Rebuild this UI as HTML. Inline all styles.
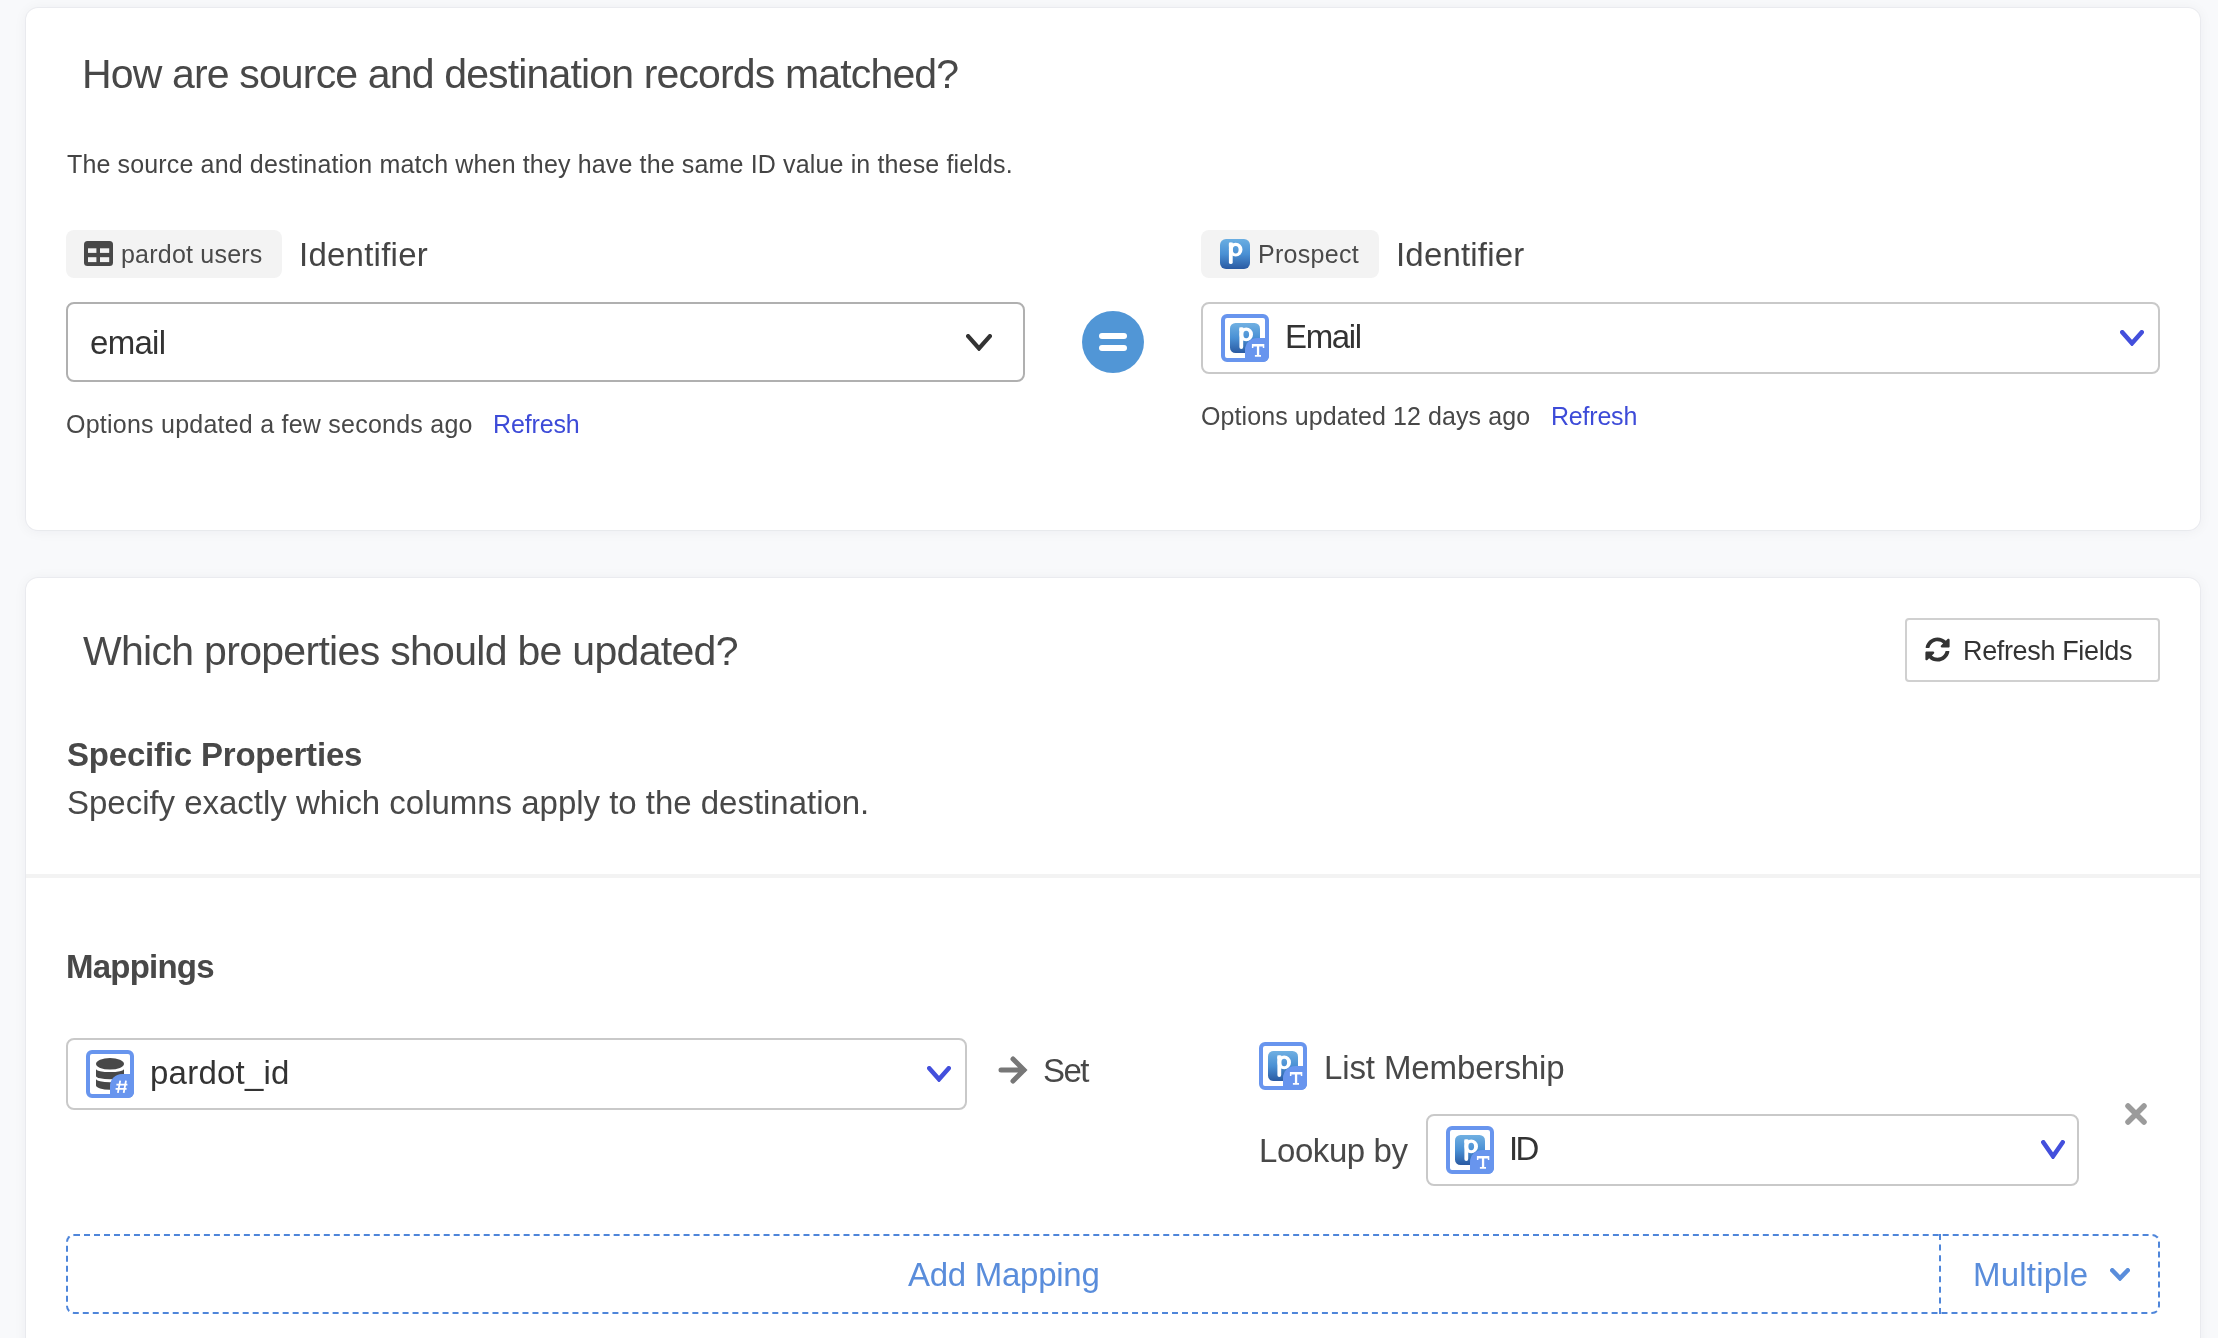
<!DOCTYPE html>
<html><head><meta charset="utf-8">
<style>
html,body{margin:0;padding:0;}
body{width:2218px;height:1338px;overflow:hidden;background:#f8f9fb;position:relative;font-family:"Liberation Sans",sans-serif;}
.card{position:absolute;background:#fff;border-radius:12px;box-shadow:0 0 0 1px rgba(20,30,50,0.04),0 1px 14px rgba(20,30,50,0.055);}
.t{position:absolute;white-space:nowrap;line-height:1;will-change:transform;}
.ic{position:absolute;display:block;}
.badge{position:absolute;background:#f3f3f3;border-radius:8px;}
.sel{position:absolute;box-sizing:border-box;background:#fff;border:2px solid #c9c9c9;border-radius:8px;}
</style></head><body>
<div class="card" style="left:26px;top:8px;width:2174px;height:522px"></div>
<div class="card" style="left:26px;top:578px;width:2174px;height:800px"></div>
<div style="position:absolute;left:26px;top:874px;width:2174px;height:4px;background:#f3f3f3"></div>

<div class="badge" style="left:66px;top:230px;width:216px;height:48px"></div>
<svg class="ic" style="left:84px;top:241px" width="29" height="25" viewBox="0 0 29 25"><rect x="0" y="0" width="29" height="25" rx="3.5" fill="#484848"/><rect x="4" y="7.3" width="8.4" height="4.6" fill="#f3f3f3"/><rect x="16" y="7.3" width="9.2" height="4.6" fill="#f3f3f3"/><rect x="4" y="16.2" width="8.4" height="4.9" fill="#f3f3f3"/><rect x="16" y="16.2" width="9.2" height="4.9" fill="#f3f3f3"/></svg>
<div class="sel" style="left:66px;top:302px;width:959px;height:80px;border-color:#b0b0b0"></div>
<svg class="ic" style="left:966px;top:334px" width="26" height="17" viewBox="0 0 26 17"><path d="M2.1 2.1 L13.0 14.48 L23.9 2.1" stroke="#333" stroke-width="4.2" fill="none" stroke-linecap="round" stroke-linejoin="miter"/></svg>

<svg class="ic" style="left:1082px;top:311px" width="62" height="62" viewBox="0 0 62 62"><circle cx="31" cy="31" r="31" fill="#5196d6"/><rect x="17" y="22" width="28" height="6" rx="3" fill="#fff"/><rect x="17" y="34" width="28" height="6" rx="3" fill="#fff"/></svg>

<div class="badge" style="left:1201px;top:230px;width:178px;height:48px"></div>
<svg class="ic" style="left:1220px;top:239px" width="30" height="30" viewBox="0 0 30 30"><defs><linearGradient id="bp" x1="0" y1="0" x2="0" y2="1"><stop offset="0" stop-color="#6aaee2"/><stop offset="0.5" stop-color="#4a90d4"/><stop offset="1" stop-color="#2a5aa2"/></linearGradient></defs><rect x="0" y="0" width="30" height="30" rx="6" fill="url(#bp)"/><g transform="translate(-0.2 -0.6) scale(1.0)"><rect x="9.1" y="4.2" width="3.8" height="21.5" rx="1.9" fill="#fff"/><path fill-rule="evenodd" d="M9.1 11.2 a6.8 6.9 0 1 0 13.6 0 a6.8 6.9 0 1 0 -13.6 0z M13 11.3 a2.9 3.7 0 1 0 5.8 0 a2.9 3.7 0 1 0 -5.8 0z" fill="#fff"/><rect x="9.1" y="4.2" width="3.9" height="4" fill="#fff"/></g></svg>
<div class="sel" style="left:1201px;top:302px;width:959px;height:72px"></div>
<svg class="ic" style="left:1221px;top:314px" width="48" height="48" viewBox="0 0 48 48">
<defs><linearGradient id="pg1221314" x1="0" y1="0" x2="0" y2="1"><stop offset="0" stop-color="#70b0e2"/><stop offset="0.5" stop-color="#4a90d4"/><stop offset="1" stop-color="#2a5aa2"/></linearGradient></defs>
<rect x="2" y="2" width="44" height="44" rx="4" fill="#fff" stroke="#6895ee" stroke-width="4"/>
<rect x="9" y="9" width="30" height="30" rx="5.5" fill="url(#pg1221314)"/>
<g transform="translate(9.3 9.2) scale(1.0)"><rect x="9.1" y="4.2" width="3.8" height="21.5" rx="1.9" fill="#fff"/><path fill-rule="evenodd" d="M9.1 11.2 a6.8 6.9 0 1 0 13.6 0 a6.8 6.9 0 1 0 -13.6 0z M13 11.3 a2.9 3.7 0 1 0 5.8 0 a2.9 3.7 0 1 0 -5.8 0z" fill="#fff"/><rect x="9.1" y="4.2" width="3.9" height="4" fill="#fff"/></g>
<path d="M24 48 V36 a12 12 0 0 1 12 -12 H48 V42 a6 6 0 0 1 -6 6 z" fill="#6895ee"/>
<path d="M30.9 30.1 H43.3 V33.9 H41.8 V32.6 H38.2 V41 H40 V42.8 H33.9 V41 H35.9 V32.6 H32.4 V33.9 H30.9 z" fill="#fff"/>
</svg>
<svg class="ic" style="left:2120px;top:330px" width="24" height="16" viewBox="0 0 24 16"><path d="M2.25 2.25 L12.0 13.3 L21.75 2.25" stroke="#434fdc" stroke-width="4.5" fill="none" stroke-linecap="round" stroke-linejoin="miter"/></svg>

<div style="position:absolute;left:1905px;top:618px;width:255px;height:64px;box-sizing:border-box;border:2px solid #d0d0d0;border-radius:4px;background:#fff"></div>
<svg class="ic" style="left:1925px;top:637px" width="25" height="25" viewBox="0 0 512 512"><path fill="#333" d="M370.72 133.28C339.458 104.008 298.888 87.962 255.848 88c-77.458.068-144.328 53.178-162.791 126.85-1.344 5.363-6.122 9.15-11.651 9.15H24.103c-7.498 0-13.194-6.807-11.807-14.176C33.933 94.924 134.813 8 256 8c66.448 0 126.791 26.136 171.315 68.685L463.03 40.97C478.149 25.851 504 36.559 504 57.941V192c0 13.255-10.745 24-24 24H345.941c-21.382 0-32.09-25.851-16.971-40.971l41.75-41.749zM32 296h134.059c21.382 0 32.09 25.851 16.971 40.971l-41.75 41.75c31.262 29.273 71.835 45.319 114.876 45.28 77.418-.07 144.315-53.144 162.787-126.849 1.344-5.363 6.122-9.15 11.651-9.15h57.304c7.498 0 13.194 6.807 11.807 14.176C478.067 417.076 377.187 504 256 504c-66.448 0-126.791-26.136-171.315-68.685L48.97 471.03C33.851 486.149 8 475.441 8 454.059V320c0-13.255 10.745-24 24-24z"/></svg>

<div class="sel" style="left:66px;top:1038px;width:901px;height:72px"></div>
<svg class="ic" style="left:86px;top:1050px" width="48" height="48" viewBox="0 0 48 48">
<rect x="2" y="2" width="44" height="44" rx="4" fill="#fff" stroke="#6895ee" stroke-width="4"/>
<ellipse cx="24" cy="13.8" rx="14" ry="5.8" fill="#484848"/>
<path d="M10 19.1 A14 3 0 0 0 38 19.1 V25.9 A14 3.4 0 0 1 10 25.9 Z" fill="#484848"/>
<path d="M10 29.1 A14 3.1 0 0 0 38 29.1 V35.6 A14 4.2 0 0 1 10 35.6 Z" fill="#484848"/>
<path d="M24 48 V36 a12 12 0 0 1 12 -12 H48 V42 a6 6 0 0 1 -6 6 z" fill="#6895ee"/>
<path d="M34.2 30.6 l-2.3 12.2 M40 30.6 l-2.3 12.2 M30.4 34.6 h11 M29.6 38.9 h11" stroke="#fff" stroke-width="1.8" fill="none"/>
</svg>
<svg class="ic" style="left:927px;top:1066px" width="24" height="16" viewBox="0 0 24 16"><path d="M2.25 2.25 L12.0 13.3 L21.75 2.25" stroke="#434fdc" stroke-width="4.5" fill="none" stroke-linecap="round" stroke-linejoin="miter"/></svg>
<svg class="ic" style="left:998px;top:1056px" width="30" height="28" viewBox="0 0 30 28"><path d="M3 14 H26 M15 3 L26 14 L15 25" stroke="#777" stroke-width="5" fill="none" stroke-linecap="round" stroke-linejoin="miter"/></svg>

<svg class="ic" style="left:1259px;top:1042px" width="48" height="48" viewBox="0 0 48 48">
<defs><linearGradient id="pg12591042" x1="0" y1="0" x2="0" y2="1"><stop offset="0" stop-color="#70b0e2"/><stop offset="0.5" stop-color="#4a90d4"/><stop offset="1" stop-color="#2a5aa2"/></linearGradient></defs>
<rect x="2" y="2" width="44" height="44" rx="4" fill="#fff" stroke="#6895ee" stroke-width="4"/>
<rect x="9" y="9" width="30" height="30" rx="5.5" fill="url(#pg12591042)"/>
<g transform="translate(9.3 9.2) scale(1.0)"><rect x="9.1" y="4.2" width="3.8" height="21.5" rx="1.9" fill="#fff"/><path fill-rule="evenodd" d="M9.1 11.2 a6.8 6.9 0 1 0 13.6 0 a6.8 6.9 0 1 0 -13.6 0z M13 11.3 a2.9 3.7 0 1 0 5.8 0 a2.9 3.7 0 1 0 -5.8 0z" fill="#fff"/><rect x="9.1" y="4.2" width="3.9" height="4" fill="#fff"/></g>
<path d="M24 48 V36 a12 12 0 0 1 12 -12 H48 V42 a6 6 0 0 1 -6 6 z" fill="#6895ee"/>
<path d="M30.9 30.1 H43.3 V33.9 H41.8 V32.6 H38.2 V41 H40 V42.8 H33.9 V41 H35.9 V32.6 H32.4 V33.9 H30.9 z" fill="#fff"/>
</svg>
<div class="sel" style="left:1426px;top:1114px;width:653px;height:72px"></div>
<svg class="ic" style="left:1446px;top:1126px" width="48" height="48" viewBox="0 0 48 48">
<defs><linearGradient id="pg14461126" x1="0" y1="0" x2="0" y2="1"><stop offset="0" stop-color="#70b0e2"/><stop offset="0.5" stop-color="#4a90d4"/><stop offset="1" stop-color="#2a5aa2"/></linearGradient></defs>
<rect x="2" y="2" width="44" height="44" rx="4" fill="#fff" stroke="#6895ee" stroke-width="4"/>
<rect x="9" y="9" width="30" height="30" rx="5.5" fill="url(#pg14461126)"/>
<g transform="translate(9.3 9.2) scale(1.0)"><rect x="9.1" y="4.2" width="3.8" height="21.5" rx="1.9" fill="#fff"/><path fill-rule="evenodd" d="M9.1 11.2 a6.8 6.9 0 1 0 13.6 0 a6.8 6.9 0 1 0 -13.6 0z M13 11.3 a2.9 3.7 0 1 0 5.8 0 a2.9 3.7 0 1 0 -5.8 0z" fill="#fff"/><rect x="9.1" y="4.2" width="3.9" height="4" fill="#fff"/></g>
<path d="M24 48 V36 a12 12 0 0 1 12 -12 H48 V42 a6 6 0 0 1 -6 6 z" fill="#6895ee"/>
<path d="M30.9 30.1 H43.3 V33.9 H41.8 V32.6 H38.2 V41 H40 V42.8 H33.9 V41 H35.9 V32.6 H32.4 V33.9 H30.9 z" fill="#fff"/>
</svg>
<svg class="ic" style="left:2041px;top:1140px" width="24" height="19" viewBox="0 0 24 19"><path d="M2.25 2.25 L12.0 16.3 L21.75 2.25" stroke="#434fdc" stroke-width="4.5" fill="none" stroke-linecap="round" stroke-linejoin="miter"/></svg>
<svg class="ic" style="left:2124px;top:1102px" width="24" height="24" viewBox="0 0 24 24"><path d="M4 4 L20 20 M20 4 L4 20" stroke="#9b9b9b" stroke-width="5.5" stroke-linecap="round"/></svg>

<div style="position:absolute;left:66px;top:1234px;width:2094px;height:80px;box-sizing:border-box;border:2px dashed #4f86da;border-radius:8px"></div>
<div style="position:absolute;left:1939px;top:1234px;width:2px;height:80px;box-sizing:border-box;border-left:2px dashed #4f86da"></div>
<svg class="ic" style="left:2110px;top:1268px" width="20" height="13" viewBox="0 0 20 13"><path d="M2.25 2.25 L10.0 10.3 L17.75 2.25" stroke="#5a8ddb" stroke-width="4.5" fill="none" stroke-linecap="round" stroke-linejoin="miter"/></svg>

<div class="t" style="left:81.60px;top:54.27px;font-size:41px;font-weight:400;color:#484848;letter-spacing:-0.849px">How are source and destination records matched?</div>
<div class="t" style="left:67.40px;top:151.82px;font-size:25px;font-weight:400;color:#444444;letter-spacing:0.145px">The source and destination match when they have the same ID value in these fields.</div>
<div class="t" style="left:121.40px;top:241.82px;font-size:25px;font-weight:400;color:#4a4a4a;letter-spacing:0.219px">pardot users</div>
<div class="t" style="left:299.00px;top:238.05px;font-size:33px;font-weight:400;color:#444444;letter-spacing:0.240px">Identifier</div>
<div class="t" style="left:90.40px;top:325.75px;font-size:33px;font-weight:400;color:#333333;letter-spacing:-0.700px">email</div>
<div class="t" style="left:66.40px;top:411.82px;font-size:25px;font-weight:400;color:#484848;letter-spacing:0.236px">Options updated a few seconds ago</div>
<div class="t" style="left:492.70px;top:411.82px;font-size:25px;font-weight:400;color:#3d4bd8;letter-spacing:-0.130px">Refresh</div>
<div class="t" style="left:1258.20px;top:241.52px;font-size:25px;font-weight:400;color:#4a4a4a;letter-spacing:0.286px">Prospect</div>
<div class="t" style="left:1395.70px;top:237.85px;font-size:33px;font-weight:400;color:#444444;letter-spacing:0.182px">Identifier</div>
<div class="t" style="left:1284.70px;top:320.25px;font-size:33px;font-weight:400;color:#333333;letter-spacing:-1.330px">Email</div>
<div class="t" style="left:1201.40px;top:403.62px;font-size:25px;font-weight:400;color:#484848;letter-spacing:0.095px">Options updated 12 days ago</div>
<div class="t" style="left:1551.30px;top:403.62px;font-size:25px;font-weight:400;color:#3d4bd8;letter-spacing:-0.203px">Refresh</div>
<div class="t" style="left:83.00px;top:631.27px;font-size:41px;font-weight:400;color:#484848;letter-spacing:-0.699px">Which properties should be updated?</div>
<div class="t" style="left:1962.80px;top:638.43px;font-size:27px;font-weight:400;color:#333333;letter-spacing:-0.351px">Refresh Fields</div>
<div class="t" style="left:66.90px;top:738.05px;font-size:33px;font-weight:700;color:#484848;letter-spacing:-0.198px">Specific Properties</div>
<div class="t" style="left:66.90px;top:786.05px;font-size:33px;font-weight:400;color:#484848;letter-spacing:-0.021px">Specify exactly which columns apply to the destination.</div>
<div class="t" style="left:65.70px;top:950.05px;font-size:33px;font-weight:700;color:#484848;letter-spacing:-0.781px">Mappings</div>
<div class="t" style="left:149.90px;top:1056.05px;font-size:33px;font-weight:400;color:#333333;letter-spacing:0.230px">pardot_id</div>
<div class="t" style="left:1043.10px;top:1054.05px;font-size:33px;font-weight:400;color:#484848;letter-spacing:-1.500px">Set</div>
<div class="t" style="left:1323.50px;top:1050.75px;font-size:33px;font-weight:400;color:#484848;letter-spacing:-0.106px">List Membership</div>
<div class="t" style="left:1258.70px;top:1133.85px;font-size:33px;font-weight:400;color:#484848;letter-spacing:-0.415px">Lookup by</div>
<div class="t" style="left:1509.00px;top:1131.75px;font-size:33px;font-weight:400;color:#333333;letter-spacing:-2.600px">ID</div>
<div class="t" style="left:908.30px;top:1258.05px;font-size:33px;font-weight:400;color:#5a8ddb;letter-spacing:-0.270px">Add Mapping</div>
<div class="t" style="left:1972.70px;top:1258.05px;font-size:33px;font-weight:400;color:#5a8ddb;letter-spacing:0.211px">Multiple</div>
</body></html>
